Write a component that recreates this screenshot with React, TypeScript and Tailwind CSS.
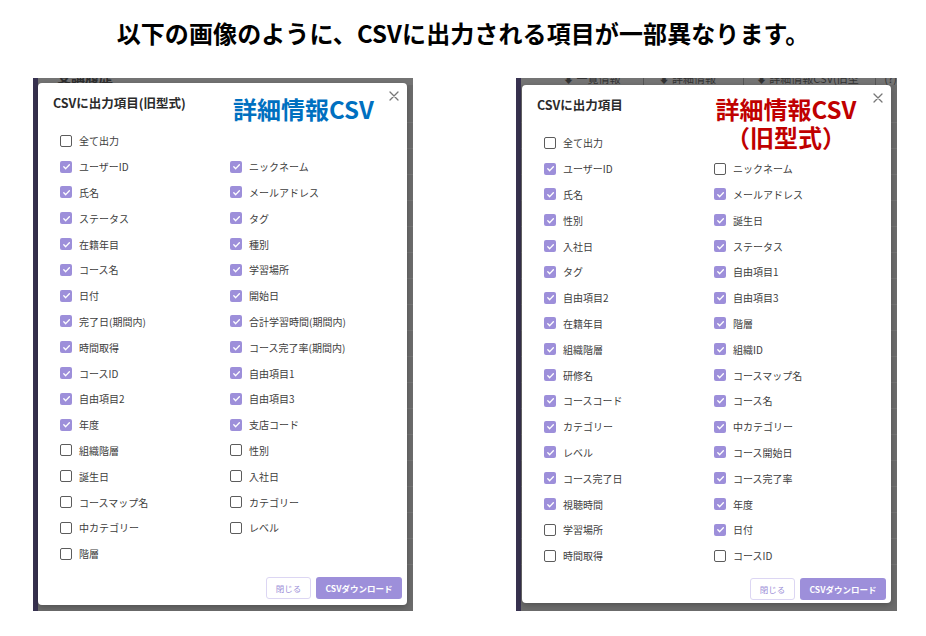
import React from "react";

type Item = { label: string; on: boolean };

const it = (label: string, on: boolean): Item => ({ label, on });

const newItems: Item[] = [
  it("ユーザーID", true), it("ニックネーム", true),
  it("氏名", true), it("メールアドレス", true),
  it("ステータス", true), it("タグ", true),
  it("在籍年目", true), it("種別", true),
  it("コース名", true), it("学習場所", true),
  it("日付", true), it("開始日", true),
  it("完了日(期間内)", true), it("合計学習時間(期間内)", true),
  it("時間取得", true), it("コース完了率(期間内)", true),
  it("コースID", true), it("自由項目1", true),
  it("自由項目2", true), it("自由項目3", true),
  it("年度", true), it("支店コード", true),
  it("組織階層", false), it("性別", false),
  it("誕生日", false), it("入社日", false),
  it("コースマップ名", false), it("カテゴリー", false),
  it("中カテゴリー", false), it("レベル", false),
  it("階層", false),
];

const oldItems: Item[] = [
  it("ユーザーID", true), it("ニックネーム", false),
  it("氏名", true), it("メールアドレス", true),
  it("性別", true), it("誕生日", true),
  it("入社日", true), it("ステータス", true),
  it("タグ", true), it("自由項目1", true),
  it("自由項目2", true), it("自由項目3", true),
  it("在籍年目", true), it("階層", true),
  it("組織階層", true), it("組織ID", true),
  it("研修名", true), it("コースマップ名", true),
  it("コースコード", true), it("コース名", true),
  it("カテゴリー", true), it("中カテゴリー", true),
  it("レベル", true), it("コース開始日", true),
  it("コース完了日", true), it("コース完了率", true),
  it("視聴時間", true), it("年度", true),
  it("学習場所", false), it("日付", true),
  it("時間取得", false), it("コースID", false),
];

function Check({ on }: { on: boolean }) {
  if (on) {
    return (
      <span className="w-[12px] h-[12px] rounded-[2px] bg-[#9d8fda] flex items-center justify-center shrink-0">
        <svg width="9" height="9" viewBox="0 0 10 10">
          <path d="M2 5.3l2.1 2.1L8.2 3" stroke="#fff" strokeWidth="1.5" fill="none" strokeLinecap="round" strokeLinejoin="round" />
        </svg>
      </span>
    );
  }
  return <span className="w-[12px] h-[12px] rounded-[2px] border-[1.5px] border-[#5c5c5c] bg-white shrink-0" />;
}

function Row({ item, wide }: { item: Item; wide?: boolean }) {
  return (
    <div className={"flex items-center gap-[7px] h-[25.8px] text-[10px] text-[#3d3d3d] " + (wide ? "col-span-2" : "")}>
      <Check on={item.on} />
      <span className="whitespace-nowrap">{item.label}</span>
    </div>
  );
}

function CloseIcon() {
  return (
    <svg width="10" height="10" viewBox="0 0 10 10" className="absolute right-[8px] top-[8px]">
      <path d="M1 1l8 8M9 1l-8 8" stroke="#777" strokeWidth="1.3" strokeLinecap="round" />
    </svg>
  );
}

function Modal({
  title,
  items,
  boxClass,
  footClass,
  children,
}: {
  title: string;
  items: Item[];
  boxClass: string;
  footClass: string;
  children?: React.ReactNode;
}) {
  return (
    <div className={"absolute bg-white rounded-[4px] shadow-[0_2px_6px_rgba(0,0,0,0.25)] flex flex-col " + boxClass}>
      <CloseIcon />
      {children}
      <div className="self-start ml-[15px] mt-[12px] text-[12.5px] leading-[16px] font-semibold text-[#2b2b2b]">{title}</div>
      <div className="pl-[22px] mt-[17px] grid grid-cols-[170px_1fr]">
        <Row item={it("全て出力", false)} wide />
        {items.map((x, i) => (
          <Row key={i} item={x} />
        ))}
      </div>
      <div className={"mt-auto flex justify-end gap-[5px] pr-[5px] " + footClass}>
        <button className="h-[22px] w-[45px] rounded-[3px] border border-[#dcd6f3] bg-white text-[8.5px] text-[#9d90d8]">
          閉じる
        </button>
        <button className="h-[22px] w-[86px] rounded-[3px] bg-[#9d8fda] text-[8.5px] font-bold text-white">
          CSVダウンロード
        </button>
      </div>
    </div>
  );
}

function Backdrop({ children, head, width }: { children: React.ReactNode; head: React.ReactNode; width: string }) {
  return (
    <div className={"relative h-[533px] overflow-hidden bg-[#6c6c6c] flex " + width}>
      <div className="w-[5px] h-full bg-[#383250] shrink-0" />
      <div className="flex-1 flex flex-col">
        <div className="h-[7px] bg-[#747474] overflow-hidden">{head}</div>
        {[38, 26, 26, 26, 26, 26, 26, 26, 26, 26, 26, 26, 26, 26, 26, 26, 26, 26].map((h, i) => (
          <div key={i} style={{ height: h }} className="border-b border-[#767676]" />
        ))}
      </div>
      {children}
    </div>
  );
}

export default function App() {
  return (
    <div className="w-[926px] h-[636px] bg-white font-['Noto_Sans_CJK_JP','Noto_Sans',sans-serif] overflow-hidden">
      <h1 className="h-[66px] flex items-center justify-center text-[24px] font-bold text-black tracking-[0.1px]">
        以下の画像のように、CSVに出力される項目が一部異なります。
      </h1>
      <div className="flex pl-[33px] gap-[103px] pt-[12px]">
        <Backdrop
          width="w-[380px]"
          head={<div className="-mt-[9px] pl-[19px] text-[14px] font-bold text-[#2e2e2e] leading-[14px]">受講履歴</div>}
        >
          <Modal
            title="CSVに出力項目(旧型式)"
            items={newItems}
            boxClass="left-[5px] top-[5px] w-[369px] h-[522px]"
            footClass="pb-[6px]"
          >
            <div className="absolute left-[195px] top-[11px] text-[24px] leading-[30px] font-bold text-[#0070c0] whitespace-nowrap">
              詳細情報CSV
            </div>
          </Modal>
        </Backdrop>
        <Backdrop
          width="w-[381px]"
          head={
            <div className="-mt-[6px] pl-[42px] flex text-[11px] leading-[12px] text-[#333]">
              <span className="pr-[10px] border-r border-[#555]">⬇ 一覧情報CSV</span>
              <span className="px-[14px] border-r border-[#555]">⬇ 詳細情報CSV</span>
              <span className="px-[12px] border-r border-[#555]">⬇ 詳細情報CSV(旧型式)</span>
              <span className="pl-[8px]">(?)</span>
            </div>
          }
        >
          <Modal
            title="CSVに出力項目"
            items={oldItems}
            boxClass="left-[6px] top-[7px] w-[369px] h-[518px]"
            footClass="pb-[3px]"
          >
            <div className="absolute left-[191px] top-[10px] w-[146px] text-center text-[24px] leading-[28px] font-bold text-[#c00000] whitespace-nowrap">
              <div>詳細情報CSV</div>
              <div>（旧型式）</div>
            </div>
          </Modal>
        </Backdrop>
      </div>
    </div>
  );
}
